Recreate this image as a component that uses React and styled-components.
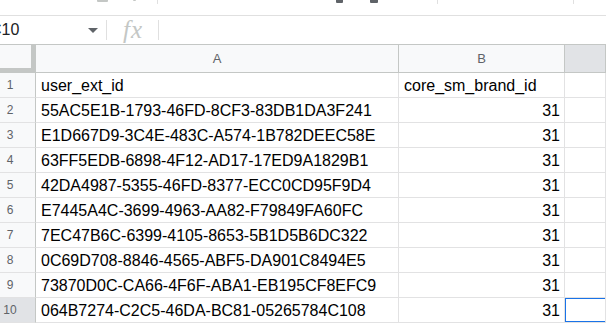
import React from "react";
import styled, { createGlobalStyle } from "styled-components";

const GlobalStyle = createGlobalStyle`
  html, body {
    margin: 0;
    padding: 0;
    background: #fff;
    overflow: hidden;
  }
  body {
    font-family: "Liberation Sans", Arial, sans-serif;
  }
`;

const Page = styled.div`
  width: 606px;
  height: 325px;
  overflow: hidden;
  background: #fff;
`;

// bottom edge of the toolbar that is cut off by the crop
const Toolbar = styled.div`
  height: 15px;
  border-bottom: 1px solid #e0e0e0;
  display: flex;
  align-items: flex-start;
`;

const ToolBit = styled.div`
  margin-left: ${(p) => p.$left}px;
  width: ${(p) => p.$w}px;
  height: ${(p) => p.$h}px;
  background: ${(p) => p.$color || "#c4c7c5"};
  border-radius: 0 0 1px 1px;
  flex: none;
`;

const FormulaBar = styled.div`
  height: 28px;
  display: flex;
  align-items: center;
`;

const NameBox = styled.div`
  width: 106px;
  height: 100%;
  display: flex;
  align-items: center;
  flex: none;
  overflow: hidden;
`;

const NameText = styled.span`
  font-size: 16px;
  color: #202124;
  margin-left: -10px;
  flex: 1;
`;

const Caret = styled.span`
  width: 0;
  height: 0;
  border-left: 5px solid transparent;
  border-right: 5px solid transparent;
  border-top: 5px solid #5f6368;
  margin-right: 8px;
  margin-top: 1px;
`;

const Divider = styled.div`
  width: 1px;
  height: 20px;
  background: #e0e0e0;
  flex: none;
`;

const FxBox = styled.div`
  width: 50px;
  display: flex;
  justify-content: center;
  align-items: center;
  font-family: "Liberation Serif", "Times New Roman", serif;
  font-style: italic;
  font-size: 25px;
  color: #c4c7c5;
  letter-spacing: 1px;
  padding-left: 1px;
  flex: none;
`;

const Sheet = styled.div`
  display: grid;
  grid-template-columns: 36px 363px 166px 1fr;
  border-top: 1px solid #c4c7c5;
`;

const Corner = styled.div`
  height: 28px;
  background: #f8f9fa;
  box-sizing: border-box;
  border-right: 5px solid #c4c7c5;
  border-bottom: 5px solid #c4c7c5;
`;

const ColHead = styled.div`
  height: 28px;
  box-sizing: border-box;
  background: ${(p) => (p.$active ? "#e1e3e6" : "#f8f9fa")};
  border-right: 1px solid #c4c7c5;
  border-bottom: 1px solid #c4c7c5;
  display: flex;
  align-items: center;
  justify-content: center;
  font-size: 13px;
  color: #5f6368;
`;

const RowHead = styled.div`
  height: 25px;
  box-sizing: border-box;
  background: ${(p) => (p.$active ? "#e1e3e6" : "#f8f9fa")};
  border-right: 1px solid #c4c7c5;
  border-bottom: 1px solid #e2e2e3;
  display: flex;
  align-items: center;
  justify-content: center;
  padding-right: 15px;
  font-size: 12px;
  color: #5f6368;
`;

const Cell = styled.div`
  height: 25px;
  box-sizing: border-box;
  border-right: 1px solid #e2e2e3;
  border-bottom: 1px solid #e2e2e3;
  display: flex;
  align-items: flex-end;
  justify-content: ${(p) => (p.$num ? "flex-end" : "flex-start")};
  padding: 0 4px 2px 5px;
  font-size: 16px;
  line-height: 18px;
  color: #000;
  white-space: nowrap;
  overflow: hidden;
  position: relative;
`;

const Selection = styled.div`
  position: absolute;
  left: -1px;
  top: -1px;
  right: -2px;
  bottom: -1px;
  border: 2px solid #1a73e8;
`;

const rows = [
  ["user_ext_id", "core_sm_brand_id"],
  ["55AC5E1B-1793-46FD-8CF3-83DB1DA3F241", 31],
  ["E1D667D9-3C4E-483C-A574-1B782DEEC58E", 31],
  ["63FF5EDB-6898-4F12-AD17-17ED9A1829B1", 31],
  ["42DA4987-5355-46FD-8377-ECC0CD95F9D4", 31],
  ["E7445A4C-3699-4963-AA82-F79849FA60FC", 31],
  ["7EC47B6C-6399-4105-8653-5B1D5B6DC322", 31],
  ["0C69D708-8846-4565-ABF5-DA901C8494E5", 31],
  ["73870D0C-CA66-4F6F-ABA1-EB195CF8EFC9", 31],
  ["064B7274-C2C5-46DA-BC81-05265784C108", 31],
];

export default function App() {
  return (
    <Page>
      <GlobalStyle />
      <Toolbar>
        <ToolBit $left={97} $w={11} $h={2} />
        <ToolBit $left={25} $w={3} $h={1} />
        <ToolBit $left={21} $w={1} $h={4} $color="#e0e0e0" />
        <ToolBit $left={178} $w={7} $h={3} $color="#5f6368" />
        <ToolBit $left={27} $w={8} $h={3} $color="#5f6368" />
        <ToolBit $left={59} $w={1} $h={4} $color="#e0e0e0" />
        <ToolBit $left={135} $w={1} $h={4} $color="#e0e0e0" />
      </Toolbar>
      <FormulaBar>
        <NameBox>
          <NameText>C10</NameText>
          <Caret />
        </NameBox>
        <Divider />
        <FxBox>fx</FxBox>
        <Divider />
      </FormulaBar>
      <Sheet>
        <Corner />
        <ColHead>A</ColHead>
        <ColHead>B</ColHead>
        <ColHead $active />
        {rows.map(([a, b], i) => {
          const n = i + 1;
          const active = n === 10;
          return (
            <React.Fragment key={n}>
              <RowHead $active={active}>{n}</RowHead>
              <Cell>{a}</Cell>
              <Cell $num={typeof b === "number"}>{b}</Cell>
              <Cell>{active && <Selection />}</Cell>
            </React.Fragment>
          );
        })}
      </Sheet>
    </Page>
  );
}
